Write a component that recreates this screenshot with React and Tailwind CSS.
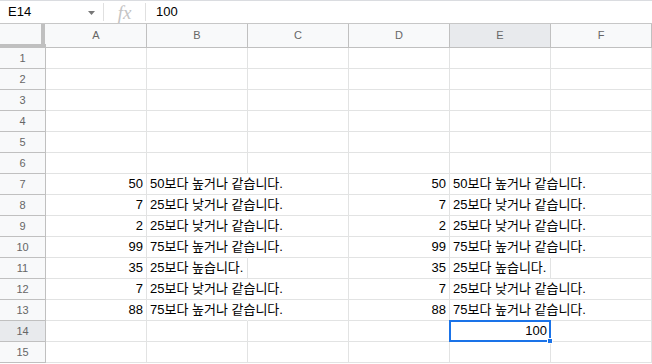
const font = { fontFamily: '"Liberation Sans", "Noto Sans CJK KR", Arial, sans-serif' };

const cols = ['A', 'B', 'C', 'D', 'E', 'F'];

const data = {
  7: [50, '50보다 높거나 같습니다.'],
  8: [7, '25보다 낮거나 같습니다.'],
  9: [2, '25보다 낮거나 같습니다.'],
  10: [99, '75보다 높거나 같습니다.'],
  11: [35, '25보다 높습니다.'],
  12: [7, '25보다 낮거나 같습니다.'],
  13: [88, '75보다 높거나 같습니다.'],
};

const Cell = ({ children, align = 'left', overflow = false, selected = false }) => (
  <div
    className={`relative w-[101px] h-full shrink-0 border-b border-[#e2e3e3] ${
      overflow ? 'border-r border-r-transparent' : 'border-r'
    } border-r-[#e2e3e3] flex items-end pb-[2px] px-[3px] text-[13px] text-black ${
      align === 'right' ? 'justify-end' : 'justify-start'
    }`}
  >
    {children !== undefined && (
      <span className={`whitespace-nowrap leading-[16px] ${overflow ? 'relative z-10' : ''}`}>{children}</span>
    )}
    {selected && (
      <div className="absolute -left-[1px] -top-[1px] w-[102px] h-[22px] border-2 border-[#1a73e8] z-20">
        <div className="absolute -right-[4px] -bottom-[4px] w-[6px] h-[6px] bg-[#1a73e8] border border-white" />
      </div>
    )}
  </div>
);

export default function App() {
  const rows = Array.from({ length: 15 }, (_, i) => i + 1);

  return (
    <div className="w-[652px] h-[364px] overflow-hidden bg-white" style={font}>
      {/* formula bar */}
      <div className="h-[24px] border-t border-[#dadce0] border-b border-b-[#c7c7c7] flex items-center">
        <div className="w-[103px] flex items-center justify-between pl-[8px] pr-[8px] text-[13px] text-black">
          <span>E14</span>
          <svg width="7" height="4" viewBox="0 0 7 4" className="mt-[1px]">
            <path d="M0 0 L7 0 L3.5 4 Z" fill="#777" />
          </svg>
        </div>
        <div className="w-px h-[18px] bg-[#e0e0e0]" />
        <div className="w-[41px] flex justify-center">
          <span
            className="text-[19px] italic text-[#c4c4c4] leading-none"
            style={{ fontFamily: '"Liberation Serif", "DejaVu Serif", serif' }}
          >
            fx
          </span>
        </div>
        <div className="w-px h-[18px] bg-[#e0e0e0]" />
        <span className="pl-[10px] text-[13px] text-black">100</span>
      </div>

      {/* column headers */}
      <div className="flex h-[24px]">
        <div className="relative w-[46px] h-full shrink-0 bg-[#f8f9fa]">
          <div className="absolute right-[1px] top-0 w-[4px] h-full bg-[#c0c0c0]" />
          <div className="absolute left-0 bottom-0 w-full h-[4px] bg-[#c0c0c0]" />
        </div>
        {cols.map((c) => (
          <div
            key={c}
            className={`w-[101px] h-full shrink-0 border-r border-b border-[#c0c0c0] flex items-center justify-center text-[11px] text-[#666] ${
              c === 'E' ? 'bg-[#e8eaed]' : 'bg-[#f8f9fa]'
            }`}
          >
            {c}
          </div>
        ))}
      </div>

      {/* rows */}
      {rows.map((r) => {
        const d = data[r];
        return (
          <div key={r} className="flex h-[21px]">
            <div
              className={`w-[46px] h-full shrink-0 border-r border-b border-[#c0c0c0] flex items-center justify-center text-[11px] text-[#666] ${
                r === 14 ? 'bg-[#e8eaed]' : 'bg-[#f8f9fa]'
              }`}
            >
              {r}
            </div>
            <Cell align="right">{d ? d[0] : undefined}</Cell>
            <Cell overflow={d && r !== 11}>{d ? d[1] : undefined}</Cell>
            <Cell />
            <Cell align="right">{d ? d[0] : undefined}</Cell>
            <Cell align={r === 14 ? 'right' : 'left'} overflow={d && r !== 11} selected={r === 14}>
              {d ? d[1] : r === 14 ? 100 : undefined}
            </Cell>
            <Cell />
          </div>
        );
      })}
    </div>
  );
}
